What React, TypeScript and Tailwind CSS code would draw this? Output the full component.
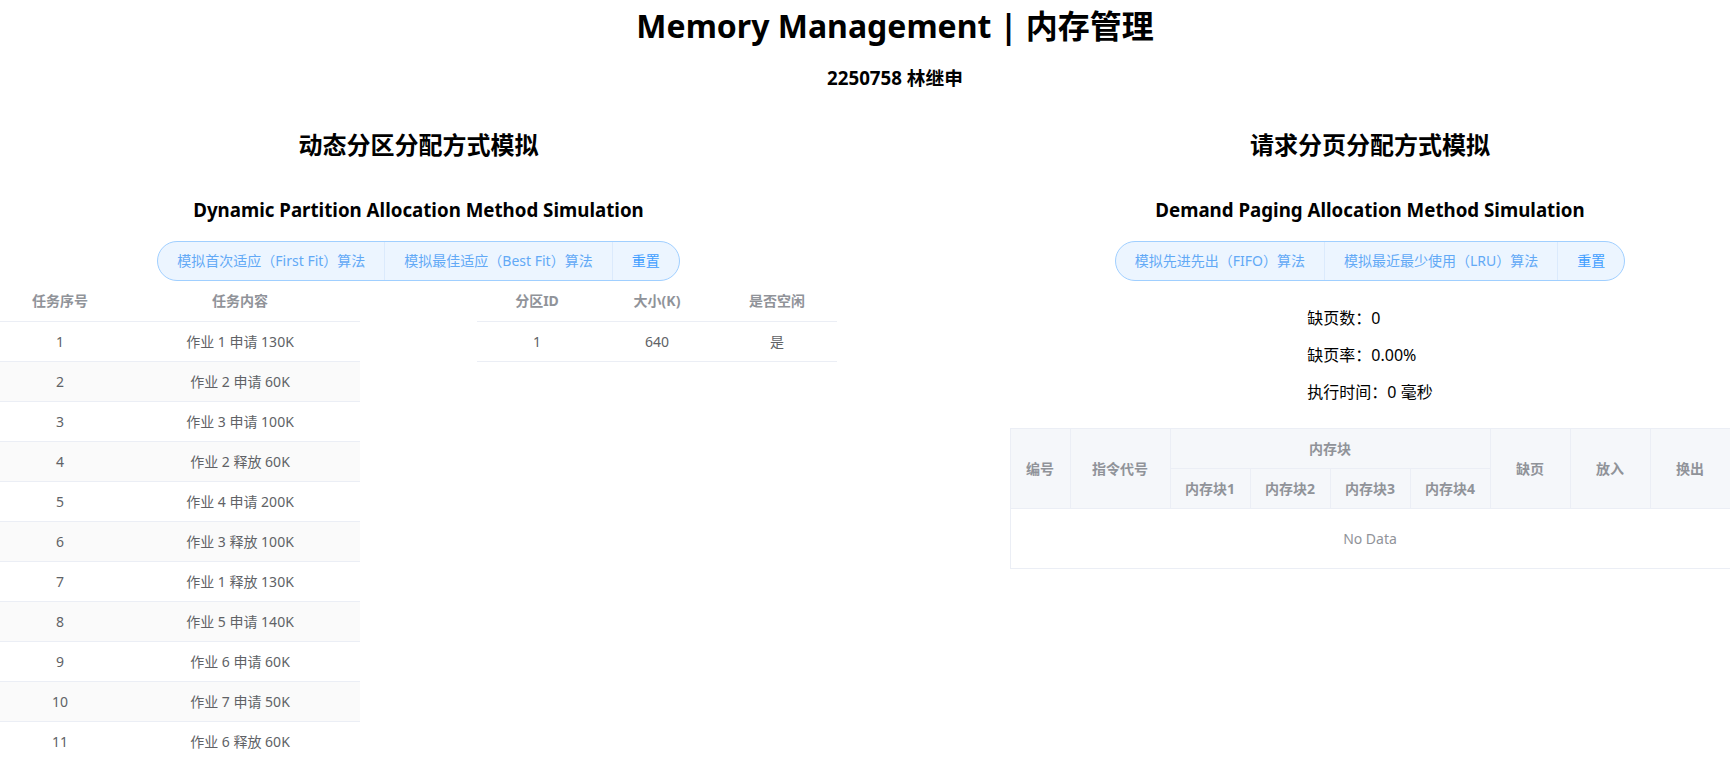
import React from "react"

const tasks = [
  "作业 1 申请 130K",
  "作业 2 申请 60K",
  "作业 3 申请 100K",
  "作业 2 释放 60K",
  "作业 4 申请 200K",
  "作业 3 释放 100K",
  "作业 1 释放 130K",
  "作业 5 申请 140K",
  "作业 6 申请 60K",
  "作业 7 申请 50K",
  "作业 6 释放 60K",
]

function Pill({ items }: { items: string[] }) {
  return (
    <div className="flex h-[40px] rounded-full border border-[#a0cfff] bg-[#ecf5ff] text-[14px]">
      {items.map((label, i) => (
        <React.Fragment key={label}>
          {i > 0 && <div className="w-px bg-[#dbeafc]" />}
          <button
            className={
              "px-[19px] leading-[38px] " +
              (i === items.length - 1 ? "text-[#409eff]" : "text-[#62a9f6]")
            }
          >
            {label}
          </button>
        </React.Fragment>
      ))}
    </div>
  )
}

function SectionHead({ cn, en }: { cn: string; en: string }) {
  return (
    <>
      <h2 className="mt-[39px] text-[24px] font-bold leading-[32px]">{cn}</h2>
      <h3 className="mt-[36px] text-[18.72px] font-bold leading-[26px]">{en}</h3>
    </>
  )
}

export default function App() {
  return (
    <div className="w-[1730px] bg-white pt-[6px] font-['Noto_Sans','Noto_Sans_CJK_SC',sans-serif] text-black">
      <div className="flex flex-col items-center pl-[60px]">
        <h1 className="text-[32px] font-bold leading-[40px]">Memory Management | 内存管理</h1>
        <h3 className="mt-[20px] text-[18.72px] font-bold leading-[24px]">2250758 林继申</h3>
      </div>

      <div className="flex justify-between">
        {/* dynamic partition */}
        <div className="flex w-[837px] flex-col items-center">
          <SectionHead cn="动态分区分配方式模拟" en="Dynamic Partition Allocation Method Simulation" />
          <div className="mt-[18px]">
            <Pill items={["模拟首次适应（First Fit）算法", "模拟最佳适应（Best Fit）算法", "重置"]} />
          </div>
          <div className="flex w-full justify-between text-[14px]">
            <table className="w-[360px] table-fixed border-collapse">
              <colgroup>
                <col className="w-[120px]" />
                <col className="w-[240px]" />
              </colgroup>
              <thead>
                <tr className="h-[40px] border-b border-[#ebeef5] font-bold text-[#909399]">
                  <th>任务序号</th>
                  <th>任务内容</th>
                </tr>
              </thead>
              <tbody className="text-[#606266]">
                {tasks.map((t, i) => (
                  <tr
                    key={t}
                    className={"h-[40px] border-b border-[#ebeef5] text-center " + (i % 2 === 1 ? "bg-[#fafafa]" : "bg-white")}
                  >
                    <td>{i + 1}</td>
                    <td>{t}</td>
                  </tr>
                ))}
              </tbody>
            </table>

            <table className="h-fit w-[360px] table-fixed border-collapse">
              <thead>
                <tr className="h-[40px] border-b border-[#ebeef5] font-bold text-[#909399]">
                  <th>分区ID</th>
                  <th>大小(K)</th>
                  <th>是否空闲</th>
                </tr>
              </thead>
              <tbody className="text-[#606266]">
                <tr className="h-[40px] border-b border-[#ebeef5] text-center">
                  <td>1</td>
                  <td>640</td>
                  <td>是</td>
                </tr>
              </tbody>
            </table>
          </div>
        </div>

        {/* demand paging */}
        <div className="flex w-[720px] flex-col items-center">
          <SectionHead cn="请求分页分配方式模拟" en="Demand Paging Allocation Method Simulation" />
          <div className="mt-[18px]">
            <Pill items={["模拟先进先出（FIFO）算法", "模拟最近最少使用（LRU）算法", "重置"]} />
          </div>
          <div className="mt-[25px] flex flex-col gap-[13px] text-[16px] leading-[24px]">
            <p>缺页数：0</p>
            <p>缺页率：0.00%</p>
            <p>执行时间：0 毫秒</p>
          </div>
          <table className="mt-[24px] w-[720px] table-fixed border-collapse border border-[#ebeef5] text-[14px]">
            <colgroup>
              <col className="w-[60px]" />
              <col className="w-[100px]" />
              <col className="w-[80px]" />
              <col className="w-[80px]" />
              <col className="w-[80px]" />
              <col className="w-[80px]" />
              <col className="w-[80px]" />
              <col className="w-[80px]" />
              <col className="w-[80px]" />
            </colgroup>
            <thead className="bg-[#f5f7fa] font-bold text-[#909399]">
              <tr className="h-[40px]">
                <th rowSpan={2} className="border border-[#ebeef5]">编号</th>
                <th rowSpan={2} className="border border-[#ebeef5]">指令代号</th>
                <th colSpan={4} className="border border-[#ebeef5]">内存块</th>
                <th rowSpan={2} className="border border-[#ebeef5]">缺页</th>
                <th rowSpan={2} className="border border-[#ebeef5]">放入</th>
                <th rowSpan={2} className="border border-[#ebeef5]">换出</th>
              </tr>
              <tr className="h-[40px]">
                <th className="border border-[#ebeef5]">内存块1</th>
                <th className="border border-[#ebeef5]">内存块2</th>
                <th className="border border-[#ebeef5]">内存块3</th>
                <th className="border border-[#ebeef5]">内存块4</th>
              </tr>
            </thead>
            <tbody>
              <tr className="h-[60px]">
                <td colSpan={9} className="text-center text-[#909399]">No Data</td>
              </tr>
            </tbody>
          </table>
        </div>
      </div>
    </div>
  )
}
